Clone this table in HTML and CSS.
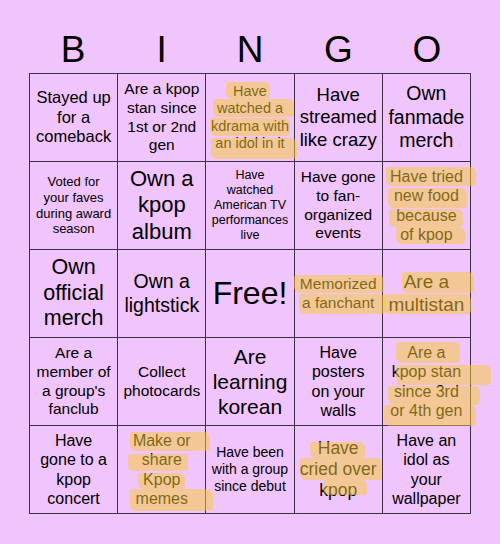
FILE: index.html
```html
<!DOCTYPE html>
<html>
<head>
<meta charset="utf-8">
<link rel="stylesheet" href="styles.css">
</head>
<body>
<div class="card">
  <div class="title">
    <span>B</span><span>I</span><span>N</span><span>G</span><span>O</span>
  </div>
  <div class="grid">
    <div class="cell s165">Stayed up<br>for a<br>comeback</div>
    <div class="cell s155">Are a kpop<br>stan since<br>1st or 2nd<br>gen</div>
    <div class="cell s145">Have<br>watched a<br>kdrama with<br>an idol in it</div>
    <div class="cell s185">Have<br>streamed<br>like crazy</div>
    <div class="cell s195">Own<br>fanmade<br>merch</div>

    <div class="cell s13">Voted for<br>your faves<br>during award<br>season</div>
    <div class="cell s22">Own a<br>kpop<br>album</div>
    <div class="cell s125">Have<br>watched<br>American TV<br>performances<br>live</div>
    <div class="cell s155">Have gone<br>to fan-<br>organized<br>events</div>
    <div class="cell s16">Have tried<br>new food<br>because<br>of kpop</div>

    <div class="cell s215">Own<br>official<br>merch</div>
    <div class="cell s195">Own a<br>lightstick</div>
    <div class="cell s32">Free!</div>
    <div class="cell s155">Memorized<br>a fanchant</div>
    <div class="cell s19">Are a<br>multistan</div>

    <div class="cell s155">Are a<br>member of<br>a group's<br>fanclub</div>
    <div class="cell s155">Collect<br>photocards</div>
    <div class="cell s21">Are<br>learning<br>korean</div>
    <div class="cell s16">Have<br>posters<br>on your<br>walls</div>
    <div class="cell s16">Are a<br>kpop stan<br>since 3rd<br>or 4th gen</div>

    <div class="cell s16">Have<br>gone to a<br>kpop<br>concert</div>
    <div class="cell s16">Make or<br>share<br>Kpop<br>memes</div>
    <div class="cell s14">Have been<br>with a group<br>since debut</div>
    <div class="cell s175">Have<br>cried over<br>kpop</div>
    <div class="cell s16">Have an<br>idol as<br>your<br>wallpaper</div>
  </div>
</div>
<div class="marks">
  <i class="hl" style="left:226px;top:82px;width:44px;height:17px"></i>
  <i class="hl" style="left:213px;top:99px;width:81px;height:18px"></i>
  <i class="hl" style="left:210px;top:118px;width:80px;height:18px"></i>
  <i class="hl" style="left:211px;top:138px;width:86px;height:21px"></i>

  <i class="hl" style="left:386px;top:167px;width:90px;height:19px"></i>
  <i class="hl" style="left:388px;top:188px;width:79px;height:20px"></i>
  <i class="hl" style="left:389px;top:209px;width:74px;height:18px"></i>
  <i class="hl" style="left:396px;top:227px;width:69px;height:17px"></i>

  <i class="hl" style="left:294px;top:275px;width:90px;height:18px"></i>
  <i class="hl" style="left:299px;top:294px;width:87px;height:20px"></i>
  <i class="hl" style="left:402px;top:272px;width:72px;height:21px"></i>
  <i class="hl" style="left:384px;top:294px;width:87px;height:20px"></i>

  <i class="hl" style="left:396px;top:342px;width:64px;height:21px"></i>
  <i class="hl" style="left:396px;top:365px;width:95px;height:20px"></i>
  <i class="hl" style="left:388px;top:386px;width:92px;height:19px"></i>
  <i class="hl" style="left:384px;top:405px;width:92px;height:21px"></i>

  <i class="hl" style="left:130px;top:432px;width:80px;height:19px"></i>
  <i class="hl" style="left:128px;top:454px;width:60px;height:17px"></i>
  <i class="hl" style="left:138px;top:473px;width:47px;height:16px"></i>
  <i class="hl" style="left:130px;top:489px;width:83px;height:22px"></i>

  <i class="hl" style="left:310px;top:442px;width:55px;height:16px"></i>
  <i class="hl" style="left:300px;top:458px;width:82px;height:22px"></i>
  <i class="hl" style="left:323px;top:480px;width:44px;height:15px"></i>
</div>
</body>
</html>
```

FILE: styles.css
```css
html, body {
  margin: 0;
  padding: 0;
}
body {
  background: #f0c4fc;
  width: 500px;
  height: 544px;
  position: relative;
  overflow: hidden;
  font-family: "Liberation Sans", Arial, sans-serif;
  color: #000;
}
.card {
  width: 442px;
  margin: 0 auto;
  padding-top: 31px;
}
.title {
  display: grid;
  grid-template-columns: repeat(5, 1fr);
  font-size: 37px;
  line-height: 37px;
  height: 37px;
  margin-bottom: 5px;
  text-align: center;
}
.grid {
  display: grid;
  grid-template-columns: repeat(5, 1fr);
  grid-auto-rows: 88px;
  border-top: 1px solid #3e3042;
  border-left: 1px solid #3e3042;
}
.cell {
  box-sizing: border-box;
  border-right: 1px solid #3e3042;
  border-bottom: 1px solid #3e3042;
  display: flex;
  align-items: center;
  justify-content: center;
  text-align: center;
  line-height: 1.2;
  white-space: nowrap;
}
.s125 { font-size: 12.5px; }
.s13 { font-size: 13px; }
.s14 { font-size: 14px; }
.s145 { font-size: 14.5px; }
.s155 { font-size: 15.5px; }
.s16 { font-size: 16px; }
.s165 { font-size: 16.5px; }
.s175 { font-size: 17.5px; }
.s185 { font-size: 18.5px; }
.s19 { font-size: 19px; }
.s195 { font-size: 19.5px; }
.s21 { font-size: 21px; }
.s215 { font-size: 21.5px; }
.s22 { font-size: 22px; }
.s32 { font-size: 32px; line-height: 1.15; }
.marks {
  position: absolute;
  left: 0;
  top: 0;
  width: 500px;
  height: 544px;
  pointer-events: none;
}
.hl {
  position: absolute;
  display: block;
  background: rgba(248, 204, 48, 0.5);
  border-radius: 3px 6px 4px 6px;
}
```
